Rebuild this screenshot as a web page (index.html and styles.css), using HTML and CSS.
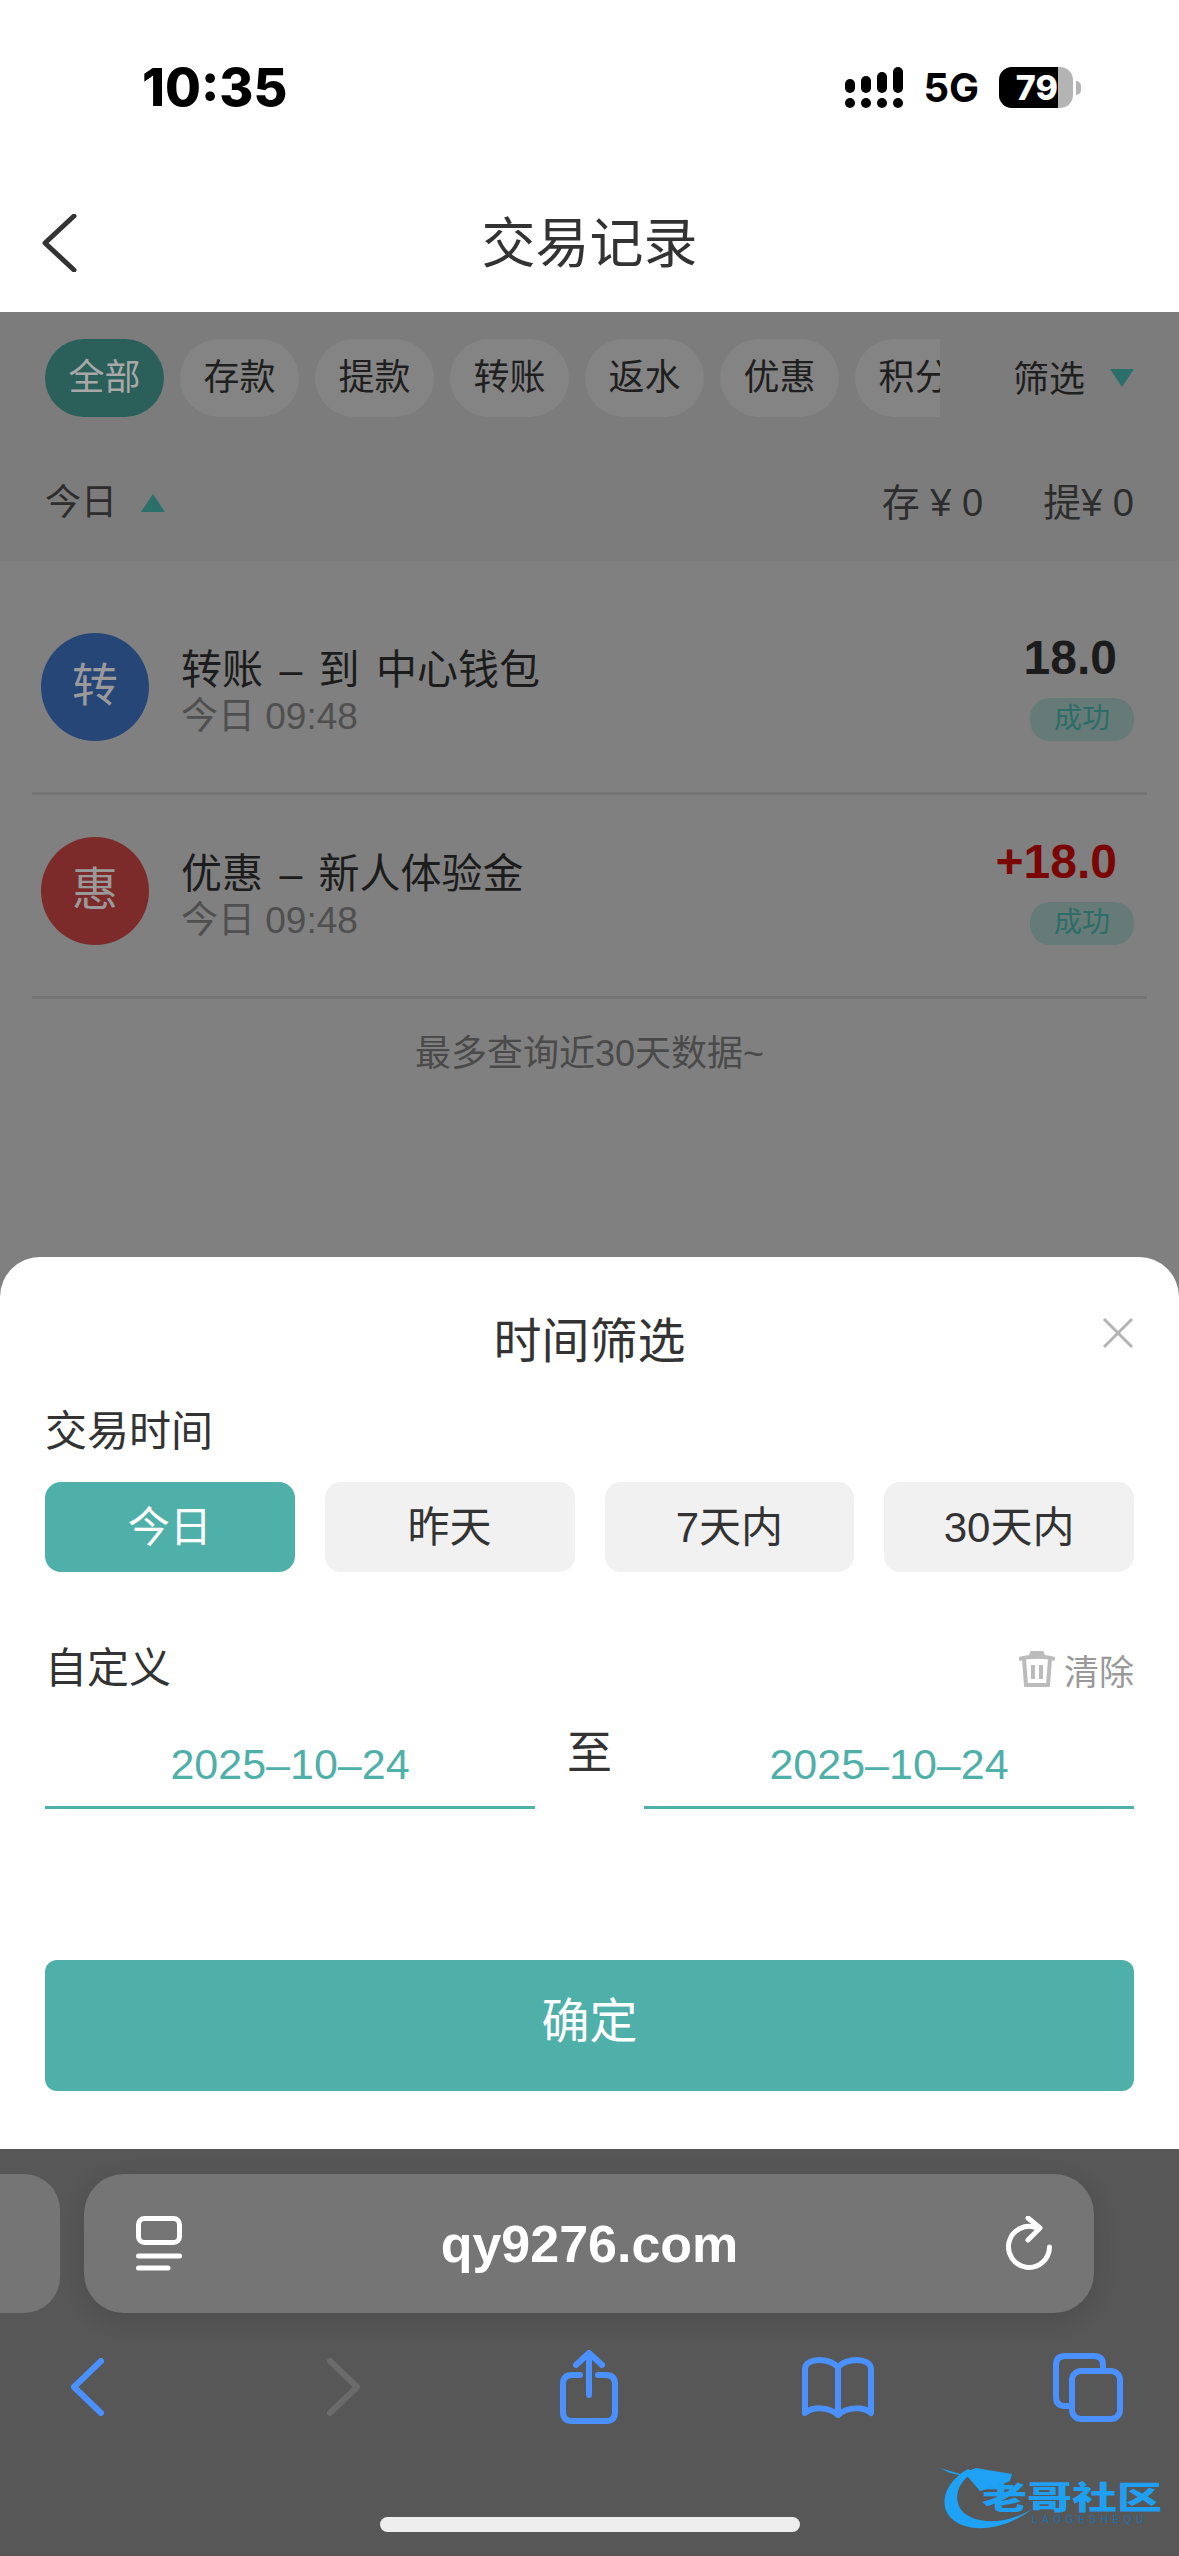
FILE: index.html
```
<!DOCTYPE html>
<html lang="zh">
	<head>
		<meta charset="UTF-8">
		<title>交易记录</title>
		<link rel="stylesheet" href="styles.css">
	</head>
	<body>
		<div id="box">
			<div class="status">
				<span class="clock">10:35</span>
				<div class="status-right">
					<svg class="signal" width="58" height="41" viewBox="0 0 58 41">
						<rect x="0" y="12" width="10" height="14" rx="5"/>
						<rect x="16" y="9" width="10" height="17" rx="5"/>
						<rect x="32" y="5" width="10" height="21" rx="5"/>
						<rect x="48" y="0" width="10" height="26" rx="5"/>
						<circle cx="5" cy="36" r="5"/>
						<circle cx="21" cy="36" r="5"/>
						<circle cx="37" cy="36" r="5"/>
						<circle cx="53" cy="36" r="5"/>
					</svg>
					<span class="net">5G</span>
					<div class="battery"><div class="battery-fill">79</div></div>
					<div class="battery-nub"></div>
				</div>
			</div>
			<div class="nav">
				<svg class="nav-back" width="36" height="58" viewBox="0 0 36 58">
					<path d="M33 2 L4 29 L33 56"/>
				</svg>
				<h1>交易记录</h1>
			</div>
			<div class="dim">
				<div class="head">
					<div class="tabs">
						<div class="tab-list">
							<span class="chip chip-on">全部</span>
							<span class="chip">存款</span>
							<span class="chip">提款</span>
							<span class="chip">转账</span>
							<span class="chip">返水</span>
							<span class="chip">优惠</span>
							<span class="chip">积分</span>
						</div>
						<div class="filter"><span class="filter-text">筛选</span><i class="tri-down"></i></div>
					</div>
					<div class="summary">
						<div class="day">今日<i class="tri-up"></i></div>
						<div class="totals"><span>存 ¥ 0</span><span>提¥ 0</span></div>
					</div>
				</div>
				<ul class="records">
					<li>
						<div class="avatar blue">转</div>
						<div class="rec-main">
							<div class="rec-title">转账 – 到 中心钱包</div>
							<div class="rec-time">今日 09:48</div>
						</div>
						<div class="rec-side">
							<div class="amount">18.0</div>
							<div class="state">成功</div>
						</div>
					</li>
					<li>
						<div class="avatar red">惠</div>
						<div class="rec-main">
							<div class="rec-title">优惠 – 新人体验金</div>
							<div class="rec-time">今日 09:48</div>
						</div>
						<div class="rec-side">
							<div class="amount plus">+18.0</div>
							<div class="state">成功</div>
						</div>
					</li>
				</ul>
				<p class="limit">最多查询近30天数据~</p>
			</div>
			<div class="sheet">
				<div class="sheet-head">
					<h2>时间筛选</h2>
					<svg class="close" width="32" height="32" viewBox="0 0 32 32">
						<path d="M2 2 L30 30 M30 2 L2 30"/>
					</svg>
				</div>
				<div class="label">交易时间</div>
				<div class="ranges">
					<span class="range range-on">今日</span>
					<span class="range">昨天</span>
					<span class="range">7天内</span>
					<span class="range">30天内</span>
				</div>
				<div class="custom">
					<span class="label">自定义</span>
					<span class="clear">
						<svg width="36" height="36" viewBox="0 0 36 36">
							<path d="M0 8 C10 5 26 5 36 8 M11 7 L13 2 H23 L25 7 M5 8 L7 34 H29 L31 8 M14 14 V28 M22 14 V28"/>
						</svg>
						清除
					</span>
				</div>
				<div class="dates">
					<div class="date">2025–10–24</div>
					<span class="to">至</span>
					<div class="date">2025–10–24</div>
				</div>
				<div class="ok">确定</div>
			</div>
			<div class="browser">
				<div class="url-row">
					<div class="tab-edge"></div>
					<div class="url">
						<svg class="url-ico" width="46" height="56" viewBox="0 0 46 56">
							<rect x="2.5" y="2.5" width="41" height="24" rx="6"/>
							<path d="M2.5 40 H43.5 M2.5 52 H32"/>
						</svg>
						<span class="url-text">qy9276.com</span>
						<svg class="url-ico" width="46" height="56" viewBox="0 0 46 56">
							<path d="M31 12 A20.5 20.5 0 1 0 43.5 31"/>
							<path d="M22 2 L34 12 L22 24"/>
						</svg>
					</div>
				</div>
				<div class="tools">
					<svg class="tool t-back" width="34" height="58" viewBox="0 0 34 58"><path d="M31 3 L4 29 L31 55"/></svg>
					<svg class="tool t-next" width="34" height="58" viewBox="0 0 34 58"><path d="M3 3 L30 29 L3 55"/></svg>
					<svg class="tool t-share" width="58" height="74" viewBox="0 0 58 74">
						<path d="M20 25 H12 Q3 25 3 34 V62 Q3 71 12 71 H46 Q55 71 55 62 V34 Q55 25 46 25 H38"/>
						<path d="M29 45 V3 M16 15 L29 3 L42 15"/>
					</svg>
					<svg class="tool t-book" width="72" height="61" viewBox="0 0 72 61">
						<path d="M36 10 C30 4 22 3 17 3 C10 3 3 6 3 12 V56 C10 50 26 49 36 58 C46 49 62 50 69 56 V12 C69 6 62 3 55 3 C50 3 42 4 36 10 V57"/>
					</svg>
					<svg class="tool t-tabs" width="70" height="69" viewBox="0 0 70 69">
						<path d="M16 53 H12 Q3 53 3 44 V12 Q3 3 12 3 H41 Q50 3 50 12 V16"/>
						<rect x="19" y="18" width="48" height="48" rx="9"/>
					</svg>
				</div>
				<div class="home-bar"></div>
				<div class="mark">
					<svg class="mark-arc" width="100" height="72" viewBox="0 0 100 72">
						<path d="M28 6 C6 18 -2 40 10 54 C24 70 62 70 92 46 C66 62 36 62 22 48 C12 36 18 18 34 9 Z"/>
						<path d="M0 5 L20 11 L36 5 L72 11 L70 18 L56 24 L40 28 L28 14 L10 10 Z"/>
					</svg>
					<span class="mark-cn">老哥社区</span>
					<span class="mark-en">LAOGESHEQU</span>
				</div>
			</div>
		</div>
	</body>
</html>
```

FILE: styles.css
```
body,ul,h1,h2,p{
	padding: 0;
	margin: 0;
}
body{
	font-family: "Liberation Sans", "Noto Sans CJK SC", sans-serif;
	background-color: #fff;
}
ul{
	list-style: none;
}
i{
	display: block;
}
#box{
	width: 1179px;
	height: 2556px;
	overflow: hidden;
	display: flex;
	flex-direction: column;
}

/* status bar */
.status{
	height: 176px;
	box-sizing: border-box;
	padding: 67px 98px 0 142px;
	display: flex;
	justify-content: space-between;
	align-items: flex-start;
	color: #000;
	font-family: "Inter", "Liberation Sans", sans-serif;
	font-weight: 800;
}
.clock{
	font-size: 52px;
	line-height: 42px;
}
.status-right{
	display: flex;
	align-items: center;
	height: 41px;
}
.net{
	font-size: 40px;
	font-weight: 700;
	margin: 0 20px 0 20px;
	line-height: 41px;
}
.battery{
	width: 74px;
	height: 41px;
	border-radius: 13px;
	background-color: #b4b4b4;
	overflow: hidden;
}
.battery-fill{
	width: 59px;
	height: 41px;
	background-color: #000;
	color: #fff;
	font-size: 34px;
	line-height: 41px;
	text-align: right;
}
.battery-nub{
	width: 5px;
	height: 14px;
	margin-left: 3px;
	border-radius: 0 7px 7px 0;
	background-color: #b4b4b4;
}

/* title */
.nav{
	height: 136px;
	display: flex;
	align-items: center;
	justify-content: center;
	position: relative;
}
.nav h1{
	font-size: 54px;
	font-weight: 400;
	color: #333;
	margin-top: -10px;
}
.nav-back{
	position: absolute;
	left: 41px;
	top: 38px;
	fill: none;
	stroke: #333;
	stroke-width: 5;
	stroke-linecap: round;
	stroke-linejoin: round;
}

/* dimmed page under the sheet */
.dim{
	height: 985px;
	flex: none;
	background-color: #808080;
}
.head{
	height: 249px;
	box-sizing: border-box;
	background-color: #7c7c7c;
	padding: 27px 45px 0;
}
.tabs{
	display: flex;
	justify-content: space-between;
	align-items: flex-start;
}
.tab-list{
	width: 895px;
	display: flex;
	gap: 16px;
	overflow: hidden;
}
.chip{
	flex: none;
	width: 119px;
	height: 78px;
	border-radius: 39px;
	background-color: #848484;
	color: #1f1f1f;
	font-size: 36px;
	line-height: 77px;
	text-align: center;
}
.chip-on{
	background-color: #2a5f5a;
	color: #a8a8a8;
}
.filter{
	display: flex;
	align-items: center;
	color: #1f1f1f;
	font-size: 36px;
	line-height: 78px;
	height: 78px;
}
.filter-text{
	padding-top: 4px;
}
.tri-down{
	width: 0;
	height: 0;
	margin-left: 25px;
	border-left: 12px solid transparent;
	border-right: 12px solid transparent;
	border-top: 18px solid #2a6f69;
}
.summary{
	margin-top: 60px;
	display: flex;
	justify-content: space-between;
	font-size: 36px;
	line-height: 52px;
	color: #2d2d2d;
}
.day{
	display: flex;
	align-items: center;
}
.tri-up{
	width: 0;
	height: 0;
	margin-left: 24px;
	border-left: 12px solid transparent;
	border-right: 12px solid transparent;
	border-bottom: 18px solid #2a6f69;
}
.totals{
	display: flex;
	gap: 60px;
	font-size: 38px;
}
.records{
	margin-top: 30px;
	padding: 0 32px;
}
.records li{
	height: 204px;
	box-sizing: border-box;
	padding: 42px 13px 0 9px;
	border-bottom: 3px solid #757575;
	display: flex;
	align-items: flex-start;
}
.avatar{
	flex: none;
	width: 108px;
	height: 108px;
	border-radius: 50%;
	color: #9a9a9a;
	font-size: 46px;
	line-height: 104px;
	text-align: center;
}
.blue{
	background-color: #274678;
}
.red{
	background-color: #7c2a2a;
}
.rec-main{
	flex: 1;
	margin-left: 32px;
	margin-top: 12px;
}
.rec-title{
	font-size: 41px;
	line-height: 50px;
	word-spacing: 5px;
	color: #1c1c1c;
}
.rec-time{
	font-size: 37px;
	line-height: 43px;
	color: #4f4f4f;
}
.rec-side{
	display: flex;
	flex-direction: column;
	align-items: flex-end;
}
.amount{
	font-weight: 700;
	font-size: 48px;
	line-height: 56px;
	margin: -3px 17px 12px 0;
	color: #1c1c1c;
}
.plus{
	color: #7a0606;
}
.state{
	width: 104px;
	height: 43px;
	border-radius: 20px;
	background-color: #667a77;
	color: #2c6d68;
	font-size: 28px;
	line-height: 42px;
	text-align: center;
}
.limit{
	margin-top: 29px;
	font-size: 36px;
	line-height: 52px;
	text-align: center;
	color: #4a4a4a;
}

/* filter sheet */
.sheet{
	height: 892px;
	flex: none;
	margin-top: -40px;
	box-sizing: border-box;
	position: relative;
	padding: 0 45px;
	background-color: #fff;
	border-radius: 40px 40px 0 0;
	color: #333;
}
.sheet-head{
	height: 146px;
	display: flex;
	align-items: center;
	justify-content: center;
}
.sheet-head h2{
	font-size: 48px;
	font-weight: 400;
	margin-top: 14px;
}
.close{
	position: absolute;
	right: 45px;
	top: 60px;
	fill: none;
	stroke: #b4b4b4;
	stroke-width: 3;
}
.label{
	font-size: 42px;
	line-height: 58px;
}
.ranges{
	display: grid;
	grid-template-columns: repeat(4, 1fr);
	gap: 30px;
	margin-top: 21px;
}
.range{
	height: 90px;
	border-radius: 16px;
	background-color: #f1f1f1;
	font-size: 42px;
	line-height: 91px;
	text-align: center;
}
.range-on{
	background-color: #4fafa9;
	color: #fff;
}
.custom{
	margin-top: 68px;
	display: flex;
	justify-content: space-between;
	align-items: center;
}
.clear{
	display: flex;
	align-items: center;
	gap: 9px;
	font-size: 35px;
	color: #999;
}
.clear svg{
	fill: none;
	stroke: #bbb;
	stroke-width: 4;
}
.dates{
	display: flex;
	justify-content: space-between;
	align-items: flex-start;
	margin-top: 18px;
}
.date{
	width: 490px;
	height: 90px;
	border-bottom: 3px solid #4fafa9;
	font-size: 43px;
	line-height: 96px;
	text-align: center;
	color: #4fafa9;
}
.to{
	font-size: 45px;
	line-height: 60px;
	margin-top: 8px;
}
.ok{
	height: 131px;
	margin-top: 151px;
	border-radius: 12px;
	background-color: #4fafa9;
	color: #fff;
	font-size: 48px;
	line-height: 124px;
	text-align: center;
}

/* safari toolbar */
.browser{
	flex: 1;
	position: relative;
	background-color: #575757;
}
.url-row{
	display: flex;
	gap: 24px;
	padding-top: 25px;
}
.tab-edge{
	width: 60px;
	height: 139px;
	border-radius: 0 36px 36px 0;
	background-color: #757575;
}
.url{
	width: 1010px;
	height: 139px;
	box-sizing: border-box;
	padding: 0 42px 0 52px;
	border-radius: 40px;
	background-color: #757575;
	box-shadow: 0 6px 24px rgba(0,0,0,.12);
	display: flex;
	justify-content: space-between;
	align-items: center;
}
.url-text{
	font-weight: 700;
	font-size: 52px;
	margin-right: 9px;
	color: #fff;
}
.url-ico{
	fill: none;
	stroke: #fff;
	stroke-width: 5;
	stroke-linecap: round;
	stroke-linejoin: round;
}
.tools{
	height: 80px;
	margin-top: 34px;
	padding-left: 70px;
	display: flex;
	align-items: center;
}
.tool{
	flex: none;
	fill: none;
	stroke: #4a90ff;
	stroke-width: 6;
	stroke-linecap: round;
	stroke-linejoin: round;
}
.t-next{
	stroke: #6b6b6b;
	margin-left: 223px;
}
.t-share{
	margin-left: 199px;
}
.t-book{
	margin-left: 184px;
}
.t-tabs{
	margin-left: 179px;
}
.home-bar{
	width: 420px;
	height: 15px;
	margin: 90px 0 0 380px;
	border-radius: 8px;
	background-color: #eee;
}
.mark{
	position: absolute;
	left: 940px;
	top: 314px;
	width: 230px;
	height: 72px;
}
.mark-arc{
	position: absolute;
	left: 0;
	top: 0;
	fill: #1fa2f5;
}
.mark-cn{
	position: absolute;
	left: 42px;
	top: 20px;
	font-size: 45px;
	line-height: 30px;
	font-weight: 900;
	transform: scaleY(.7);
	color: #1f9ff2;
	white-space: nowrap;
}
.mark-en{
	position: absolute;
	left: 92px;
	top: 53px;
	font-size: 10px;
	line-height: 8px;
	letter-spacing: 4.6px;
	color: #1a6fb0;
	white-space: nowrap;
}
```
